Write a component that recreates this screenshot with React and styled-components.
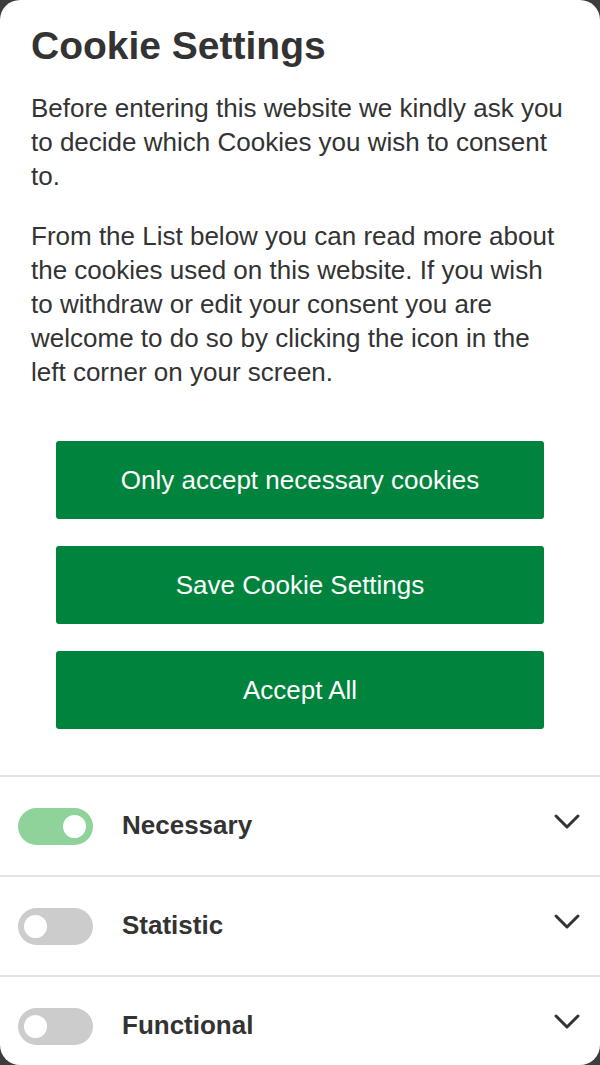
import React, { useState } from "react";
import styled, { createGlobalStyle } from "styled-components";

const GlobalStyle = createGlobalStyle`
  html, body {
    margin: 0;
    padding: 0;
    background: #3d3d3d;
  }
  body {
    font-family: "Liberation Sans", Arial, sans-serif;
  }
`;

const Modal = styled.div`
  width: 600px;
  height: 1065px;
  background: #fff;
  border-radius: 20px;
  overflow: hidden;
  display: flex;
  flex-direction: column;
`;

const Intro = styled.div`
  padding: 25px 31px 0;
`;

const Title = styled.h1`
  margin: 0;
  font-size: 39px;
  line-height: 42px;
  font-weight: bold;
  color: #333;
`;

const Text = styled.p`
  margin: ${p => (p.first ? "24px" : "26px")} 0 0;
  font-size: 26px;
  line-height: 34px;
  color: #333;
`;

const Buttons = styled.div`
  display: flex;
  flex-direction: column;
  gap: 27px;
  padding: 52px 56px 46px;
`;

const Button = styled.button`
  height: 78px;
  border: none;
  border-radius: 3px;
  background: #00843d;
  color: #fff;
  font-family: inherit;
  font-size: 26px;
  cursor: pointer;
`;

const Row = styled.div`
  flex-shrink: 0;
  display: flex;
  align-items: center;
  height: 97px;
  border-top: 2px solid #e3e3e3;
  padding: 1px 18px 0;
`;

const Toggle = styled.button`
  position: relative;
  width: 75px;
  height: 37px;
  border: none;
  border-radius: 19px;
  padding: 0;
  background: ${p => (p.on ? "#8fd29a" : "#cccccc")};
  cursor: pointer;

  &::after {
    content: "";
    position: absolute;
    top: 7px;
    left: ${p => (p.on ? "45px" : "6px")};
    width: 23px;
    height: 23px;
    border-radius: 50%;
    background: #fff;
  }
`;

const Label = styled.span`
  flex: 1;
  margin-left: 29px;
  margin-bottom: 3px;
  font-size: 26px;
  font-weight: bold;
  color: #333;
`;

const Chevron = styled.svg`
  width: 28px;
  height: 18px;
  margin-right: 1px;
  margin-top: -10px;
`;

const categories = [
  { name: "Necessary", on: true },
  { name: "Statistic", on: false },
  { name: "Functional", on: false }
];

const App = () => {
  const [state, setState] = useState(categories);

  const flip = i => {
    if (i === 0) return;
    setState(state.map((c, j) => (j === i ? { ...c, on: !c.on } : c)));
  };

  return (
    <>
      <GlobalStyle />
      <Modal>
        <Intro>
          <Title>Cookie Settings</Title>
          <Text first>
            Before entering this website we kindly ask you to decide which
            Cookies you wish to consent to.
          </Text>
          <Text>
            From the List below you can read more about the cookies used on
            this website. If you wish to withdraw or edit your consent you are
            welcome to do so by clicking the icon in the left corner on your
            screen.
          </Text>
        </Intro>
        <Buttons>
          <Button>Only accept necessary cookies</Button>
          <Button>Save Cookie Settings</Button>
          <Button>Accept All</Button>
        </Buttons>
        {state.map((c, i) => (
          <Row key={c.name}>
            <Toggle on={c.on} onClick={() => flip(i)} />
            <Label>{c.name}</Label>
            <Chevron viewBox="0 0 28 18">
              <path
                d="M3 3 L14 14 L25 3"
                fill="none"
                stroke="#333"
                strokeWidth="3"
                strokeLinecap="round"
                strokeLinejoin="round"
              />
            </Chevron>
          </Row>
        ))}
      </Modal>
    </>
  );
};

export default App;
